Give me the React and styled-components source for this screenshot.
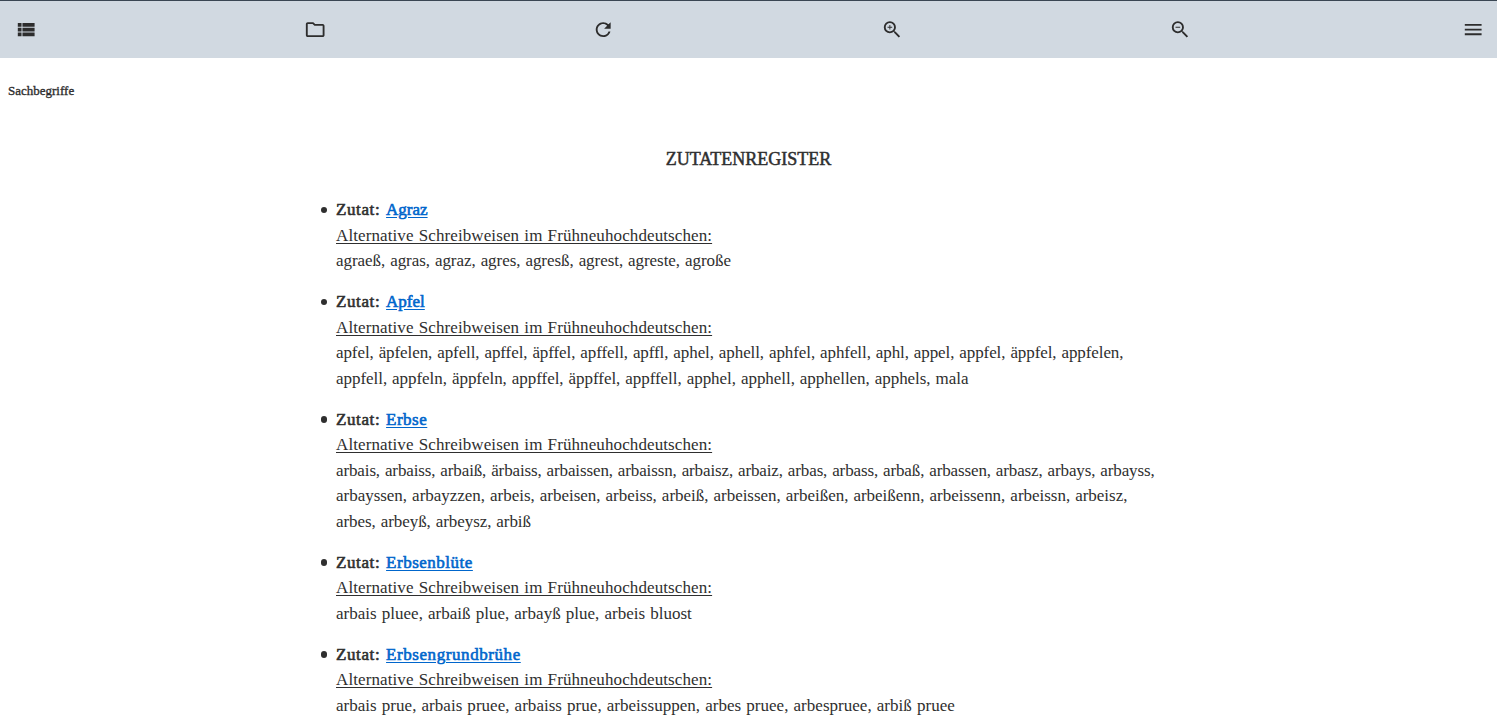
import React from "react";
import styled, { createGlobalStyle } from "styled-components";
import { MdViewList, MdOutlineFolder, MdRefresh, MdZoomIn, MdZoomOut, MdMenu } from "react-icons/md";

const GlobalStyle = createGlobalStyle`
  * { box-sizing: border-box; }
  body {
    margin: 0;
    overflow: hidden;
    background: #fff;
    color: #2f2f2f;
    font-family: "Liberation Serif", serif;
  }
`;

const Page = styled.div`
  height: 728px;
  overflow: hidden;
`;

const Toolbar = styled.header`
  display: grid;
  grid-template-columns: repeat(5, 288.6px) 1fr;
  align-items: center;
  height: 58px;
  padding: 0 12.4px 0 15px;
  border-top: 1px solid #3a4653;
  background: #d1d9e1;
`;

const ToolButton = styled.button`
  display: flex;
  justify-self: ${(p) => (p.$end ? "end" : "start")};
  padding: 0;
  border: 0;
  background: none;
  color: #2d2d2d;
  font-size: 22.4px;

  svg { transform: translateY(0.4px); }
`;

const Crumb = styled.div`
  padding: 23px 8px 0;
  font-size: 13px;
  line-height: 20px;
  -webkit-text-stroke: 0.35px currentColor;
`;

const Main = styled.main`
  width: 865px;
  margin: 0 auto;
  padding-left: 20px;
`;

const Title = styled.h1`
  margin: 45px 20px 0 0;
  font-size: 18px;
  font-weight: 400;
  line-height: 26px;
  text-align: center;
  -webkit-text-stroke: 0.5px currentColor;
`;

const Register = styled.ul`
  margin: 25px 0 0;
  padding: 0;
  list-style: none;
`;

const Entry = styled.li`
  position: relative;
  margin-bottom: 15.2px;
  font-size: 17px;
  line-height: 25.6px;

  &::before {
    content: "";
    position: absolute;
    top: 9.6px;
    left: -15.4px;
    width: 6.4px;
    height: 6.4px;
    border-radius: 50%;
    background: currentColor;
  }
`;

const Line = styled.span`
  display: block;
  width: max-content;
  white-space: nowrap;
  word-spacing: 0.8px;
  letter-spacing: ${(p) => p.$track || 0}px;
  text-decoration: ${(p) => (p.$underline ? "underline" : "none")};
  text-underline-offset: 2px;
`;

const Heading = styled(Line)`
  font-weight: 400;
  word-spacing: 1px;
  -webkit-text-stroke: 0.6px currentColor;
`;

const Label = styled.span`
  letter-spacing: 0.6px;
`;

const Name = styled.a`
  color: #0066cc;
  letter-spacing: ${(p) => p.$track}px;
  text-decoration: underline;
  text-underline-offset: 2px;
`;

const tools = [MdViewList, MdOutlineFolder, MdRefresh, MdZoomIn, MdZoomOut, MdMenu];

const entries = [
  { name: "Agraz", track: 0, lines: [["agraeß, agras, agraz, agres, agresß, agrest, agreste, agroße", -0.056]] },
  {
    name: "Apfel",
    track: 0,
    lines: [
      ["apfel, äpfelen, apfell, apffel, äpffel, apffell, apffl, aphel, aphell, aphfel, aphfell, aphl, appel, appfel, äppfel, appfelen,", -0.088],
      ["appfell, appfeln, äppfeln, appffel, äppffel, appffell, apphel, apphell, apphellen, apphels, mala", -0.045],
    ],
  },
  {
    name: "Erbse",
    track: 0.5,
    lines: [
      ["arbais, arbaiss, arbaiß, ärbaiss, arbaissen, arbaissn, arbaisz, arbaiz, arbas, arbass, arbaß, arbassen, arbasz, arbays, arbayss,", -0.12],
      ["arbayssen, arbayzzen, arbeis, arbeisen, arbeiss, arbeiß, arbeissen, arbeißen, arbeißenn, arbeissenn, arbeissn, arbeisz,", -0.02],
      ["arbes, arbeyß, arbeysz, arbiß", -0.066],
    ],
  },
  { name: "Erbsenblüte", track: 0.51, lines: [["arbais pluee, arbaiß plue, arbayß plue, arbeis bluost", 0.017]] },
  { name: "Erbsengrundbrühe", track: 0.57, lines: [["arbais prue, arbais pruee, arbaiss prue, arbeissuppen, arbes pruee, arbespruee, arbiß pruee", 0.028]] },
];

export default function App() {
  return (
    <Page>
      <GlobalStyle />
      <Toolbar>
        {tools.map((Icon, i) => (
          <ToolButton key={i} $end={i === tools.length - 1}>
            <Icon />
          </ToolButton>
        ))}
      </Toolbar>
      <Crumb>Sachbegriffe</Crumb>
      <Main>
        <Title>ZUTATENREGISTER</Title>
        <Register>
          {entries.map(({ name, track, lines }) => (
            <Entry key={name}>
              <Heading>
                <Label>Zutat: </Label>
                <Name $track={track}>{name}</Name>
              </Heading>
              <Line $underline $track={0.1}>Alternative Schreibweisen im Frühneuhochdeutschen:</Line>
              {lines.map(([text, spacing]) => (
                <Line key={text} $track={spacing}>{text}</Line>
              ))}
            </Entry>
          ))}
        </Register>
      </Main>
    </Page>
  );
}
